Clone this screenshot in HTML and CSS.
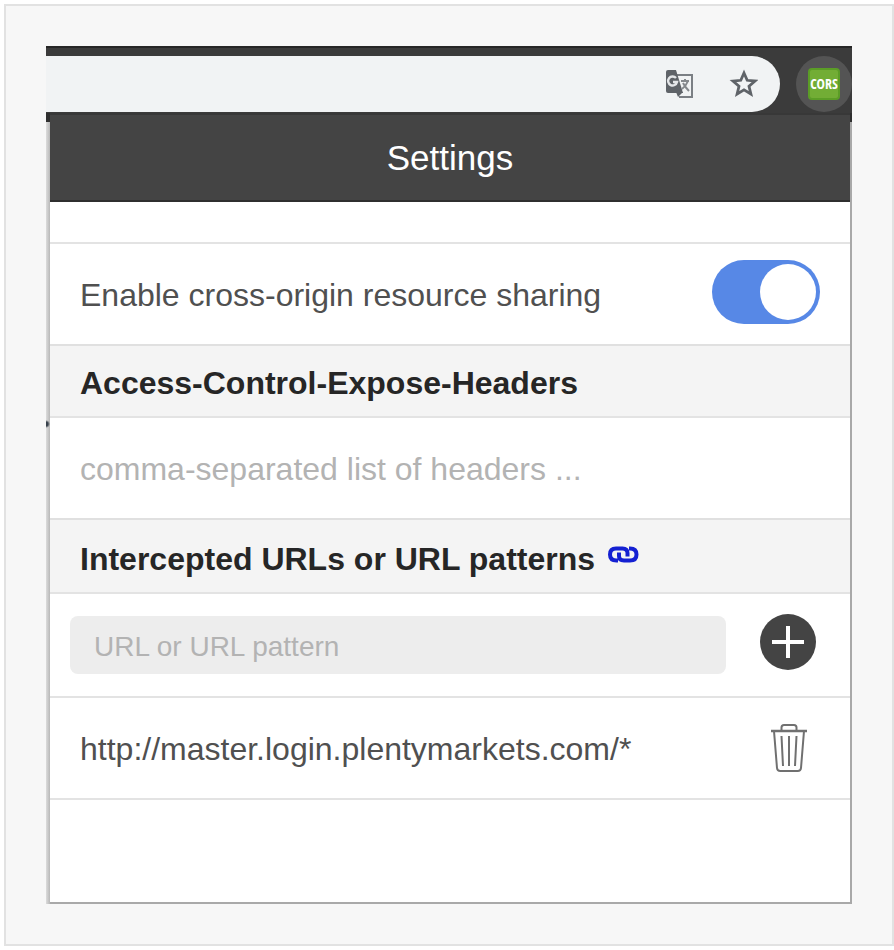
FILE: index.html
```html
<!DOCTYPE html>
<html lang="en">
<head>
<meta charset="utf-8">
<meta name="viewport" content="width=device-width, initial-scale=1">
<title>Settings</title>
<link rel="stylesheet" href="styles.css">
</head>
<body>
<main class="frame">
  <div class="toolbar">
    <div class="omnibox">
      <button class="tool" type="button" aria-label="Translate this page">
        <svg width="30" height="30" viewBox="0 0 30 30">
          <path d="M13 6H28V28H15" fill="#f1f3f4" stroke="#7b7f84" stroke-width="2"/>
          <path d="M4 1H12L19 24H4Q2 24 2 22V3Q2 1 4 1Z" fill="#5f6368"/>
          <path d="M14 28L19 23H12Z" fill="#5f6368"/>
          <path d="M12 9A4.500 4.500 0 1 0 13 13H9" fill="none" stroke="#e4e6e8" stroke-width="2.400"/>
          <path d="M17 12H25M21 10V12M24 12Q22 17 18 20M19 14Q21 18 25 22" fill="none" stroke="#85898d" stroke-width="2"/>
        </svg>
      </button>
      <button class="tool" type="button" aria-label="Bookmark this page">
        <svg width="30" height="30" viewBox="0 0 30 30">
          <path d="M16 4L19.200 11.300L27 12L21 17.300L22.900 25L16 20.900L9.100 25L11 17.300L5 12L12.800 11.300Z" fill="none" stroke="#5f6368" stroke-width="2.800"/>
        </svg>
      </button>
    </div>
    <button class="extension" type="button"><span class="extension-label">CORS</span></button>
  </div>
  <div class="viewport">
    <section class="popup">
      <h1 class="title">Settings</h1>
      <div class="row">
        <label for="enable">Enable cross-origin resource sharing</label>
        <input class="switch" id="enable" type="checkbox" checked>
      </div>
      <h2 class="section"><label for="headers">Access-Control-Expose-Headers</label></h2>
      <div class="row">
        <input class="headers" id="headers" type="text" placeholder="comma-separated list of headers ...">
      </div>
      <h2 class="section section-links"><label for="pattern">Intercepted URLs or URL patterns</label>
        <a class="link" href="#patterns" aria-label="About URL patterns">
          <svg width="32" height="18" viewBox="0 0 32 18" fill="none" stroke="#1420d2" stroke-width="4">
            <path d="M11 15.500H9.500Q3 15.500 3 9.500Q3 3.500 9 3.500H15.500Q20.500 3.500 20.500 8V11.500"/>
            <path d="M22 3.500H23Q29.500 3.500 29.500 9.500Q29.500 15.500 23 15.500H17Q12 15.500 12 11V7.500"/>
          </svg>
        </a>
      </h2>
      <div class="row row-add">
        <input class="pattern" id="pattern" type="text" placeholder="URL or URL pattern">
        <button class="add" type="button" aria-label="Add pattern">
          <svg width="32" height="32" viewBox="0 0 32 32" stroke="#fff" stroke-width="4"><path d="M16 0V32M0 16H32"/></svg>
        </button>
      </div>
      <div class="row" id="patterns">
        <span>http://master.login.plentymarkets.com/*</span>
        <button class="delete" type="button" aria-label="Delete pattern">
          <svg width="38" height="50" viewBox="0 0 38 50" fill="none" stroke="#707070" stroke-width="2">
            <path d="M1 7H37" stroke-width="2.400"/>
            <path d="M11.500 7V3.500Q11.500 1 14 1H24Q26.500 1 26.500 3.500V7"/>
            <path d="M4 7L7 44Q7.300 47 10.300 47H27.700Q30.700 47 31 44L34 7"/>
            <path d="M11.500 12L13 42M19 12V42M26.500 12L25 42"/>
          </svg>
        </button>
      </div>
    </section>
  </div>
</main>
</body>
</html>
```
FILE: styles.css
```css
* {
  box-sizing: border-box;
}

body {
  margin: 0;
  background: #fff;
  color: #505050;
  font: 32px/40px "Liberation Sans", Arial, sans-serif;
}

button {
  padding: 0;
  border: 0;
  background: none;
  font: inherit;
}

svg {
  display: block;
}

.frame {
  margin: 4px 0 4px 4px;
  padding: 40px;
  border: 2px solid #e2e2e2;
  background: #f7f7f7;
}

.toolbar {
  display: flex;
  align-items: center;
  gap: 16px;
  height: 67px;
  padding-top: 7px;
  border-top: 2px solid #262626;
  background: #3b3b3b;
}

.omnibox {
  display: flex;
  flex: 1;
  align-items: center;
  justify-content: flex-end;
  gap: 34px;
  height: 56px;
  padding-right: 22px;
  border-radius: 0 28px 28px 0;
  background: #f1f3f4;
}

.extension {
  display: grid;
  place-items: center;
  width: 56px;
  height: 56px;
  border-radius: 50%;
  background: #545454;
}

.extension-label {
  display: flex;
  justify-content: center;
  width: 32px;
  height: 32px;
  border: 2px solid #5b9d26;
  border-radius: 4px;
  background: #72ad35;
  color: #fff;
  font: bold 14px/28px "Open Sans Condensed", "Liberation Sans Narrow", sans-serif;
}

.viewport {
  padding: 0 2px 2px 4px;
  background:
    radial-gradient(circle at 0 311px, #37414b 2px, transparent 4px) 0 0 / 4px 100% no-repeat,
    linear-gradient(#2f2f2f, #2f2f2f) 0 0 / 100% 9px no-repeat,
    linear-gradient(90deg, #dcdcdc, #b8b8b8) 0 0 / 4px 100% no-repeat,
    #a9a9a9;
}

.popup {
  padding-bottom: 102px;
  background: #fff;
}

.title {
  height: 89px;
  margin: 0 0 40px;
  border-top: 2px solid #383838;
  border-bottom: 2px solid #2f2f2f;
  background: #444;
  color: #fff;
  font-size: 35px;
  font-weight: 400;
  line-height: 86px;
  text-align: center;
}

.row {
  display: flex;
  align-items: center;
  justify-content: space-between;
  height: 102px;
  padding: 2px 30px 0;
  border-top: 2px solid #e3e3e3;
}

.row:last-child {
  height: 104px;
  padding-right: 42px;
  border-bottom: 2px solid #e3e3e3;
}

.section {
  display: flex;
  align-items: center;
  gap: 12px;
  height: 72px;
  margin: 0;
  padding: 4px 30px 0;
  border-top: 2px solid #e0e0e0;
  background: #f4f4f4;
  color: #262626;
  font-size: 32px;
}

.section-links {
  height: 74px;
  padding-top: 6px;
}

.link {
  padding-bottom: 10px;
}

.switch {
  display: flex;
  justify-content: flex-end;
  width: 108px;
  height: 64px;
  margin: 0 0 6px;
  padding: 4px;
  border-radius: 32px;
  background: #5788e6;
  appearance: none;
}

.switch::before {
  width: 56px;
  height: 56px;
  border-radius: 50%;
  background: #fff;
  content: "";
}

.switch:not(:checked) {
  justify-content: flex-start;
  background: #bbb;
}

.headers,
.pattern {
  flex: 1;
  min-width: 0;
  padding: 0;
  border: 0;
  background: none;
  color: #505050;
  font: inherit;
}

.headers::placeholder,
.pattern::placeholder {
  color: #b3b3b3;
  opacity: 1;
}

.row-add {
  gap: 34px;
  height: 104px;
  padding: 0 34px 0 20px;
}

.pattern {
  height: 58px;
  padding: 4px 24px 0;
  border-radius: 8px;
  background: #ededed;
  font-size: 28px;
}

.add {
  display: grid;
  place-items: center;
  width: 56px;
  height: 56px;
  margin-bottom: 6px;
  border-radius: 50%;
  background: #444;
}
```
